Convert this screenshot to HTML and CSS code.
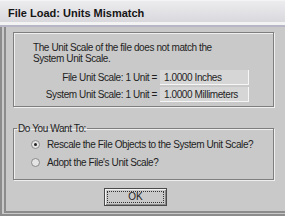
FILE: index.html
```html
<!DOCTYPE html>
<html>
<head>
<meta charset="utf-8">
<link rel="stylesheet" href="styles.css">
</head>
<body>
<div class="window">
  <div class="titlebar">File Load: Units Mismatch</div>
  <div class="band"></div>
  <div class="frame">
    <div class="group info">
      <p class="msg">The Unit Scale of the file does not match the<br>System Unit Scale.</p>
      <div class="rows">
        <span class="lbl">File Unit Scale: 1 Unit =</span>
        <span class="field">1.0000 Inches</span>
        <span class="lbl">System Unit Scale: 1 Unit =</span>
        <span class="field">1.0000 Millimeters</span>
      </div>
    </div>
    <fieldset class="choice">
      <legend>Do You Want To:</legend>
      <div class="opt"><span class="radio checked"></span><span>Rescale the File Objects to the System Unit Scale?</span></div>
      <div class="opt"><span class="radio"></span><span>Adopt the File's Unit Scale?</span></div>
    </fieldset>
    <div class="actions">
      <div class="btn"><span class="focus">OK</span></div>
    </div>
  </div>
</div>
</body>
</html>
```
FILE: styles.css
```css
html, body {
  margin: 0;
  padding: 0;
  background: #c9c9c9;
}
body {
  font-family: "Liberation Sans", Arial, sans-serif;
  font-size: 10px;
  line-height: 11px;
  letter-spacing: -0.4px;
  color: #1e1e1e;
}
.window {
  width: 285px;
  height: 216px;
  display: flex;
  flex-direction: column;
  overflow: hidden;
}
.titlebar {
  height: 22px;
  flex: none;
  box-sizing: border-box;
  padding: 6px 0 0 8px;
  font-size: 11px;
  font-weight: bold;
  letter-spacing: 0;
  line-height: 12px;
  color: #151515;
  background: linear-gradient(#ececef, #d9d9dd);
  border-top: 1px solid #f4f4f4;
}
.band {
  height: 5px;
  flex: none;
  background: linear-gradient(#f3f3f3 0, #f3f3f3 3px, #b6b6c6 3px, #b6b6c6 5px);
}
.frame {
  flex: 1;
  display: flex;
  flex-direction: column;
  border-left: 6px double #8c8c8c;
  border-bottom: 5px double #8c8c8c;
  padding: 5px 11px 0 7px;
}
.group {
  border: 1px solid #7e7e7e;
  box-shadow: 1px 1px 0 #efefef, inset 1px 1px 0 #efefef;
}
.info {
  height: 75px;
  box-sizing: border-box;
  padding: 9px 24px 0 19px;
}
.msg {
  margin: 0;
}
.rows {
  margin-top: 6px;
  display: grid;
  grid-template-columns: 1fr 89px;
  column-gap: 2px;
  row-gap: 2px;
}
.lbl {
  text-align: right;
  line-height: 15px;
  height: 15px;
  padding-right: 1px;
}
.field {
  height: 15px;
  line-height: 15px;
  box-sizing: border-box;
  padding-left: 4px;
  background: #d6d6d6;
  border-bottom: 1px solid #f6f6f6;
  border-right: 1px solid #f6f6f6;
}
.choice {
  margin: 16px 0 0 0;
  padding: 1px 0 8px 17px;
  min-width: 0;
  border: 1px solid #7e7e7e;
  box-shadow: 1px 1px 0 #efefef, inset 1px 1px 0 #efefef;
}
.choice legend {
  padding: 0 1px;
  margin-left: -14px;
}
.opt {
  height: 18px;
  display: flex;
  align-items: center;
  gap: 7px;
}
.radio {
  width: 9px;
  height: 9px;
  flex: none;
  box-sizing: border-box;
  border-radius: 50%;
  border: 1px solid #8a8a8a;
  background: #e4e4e4;
  display: flex;
  align-items: center;
  justify-content: center;
}
.radio.checked::after {
  content: "";
  width: 3px;
  height: 3px;
  border-radius: 50%;
  background: #222;
}
.actions {
  margin-top: 8px;
  display: flex;
  padding-left: 91px;
}
.btn {
  width: 63px;
  height: 18px;
  box-sizing: border-box;
  border: 1px solid #4a4a4a;
  box-shadow: inset 1px 1px 0 #f2f2f2, inset -1px -1px 0 #8a8a8a;
  padding: 2px;
  display: flex;
}
.focus {
  flex: 1;
  border: 1px dotted #333;
  text-align: center;
  line-height: 10px;
  letter-spacing: 0;
}
```
